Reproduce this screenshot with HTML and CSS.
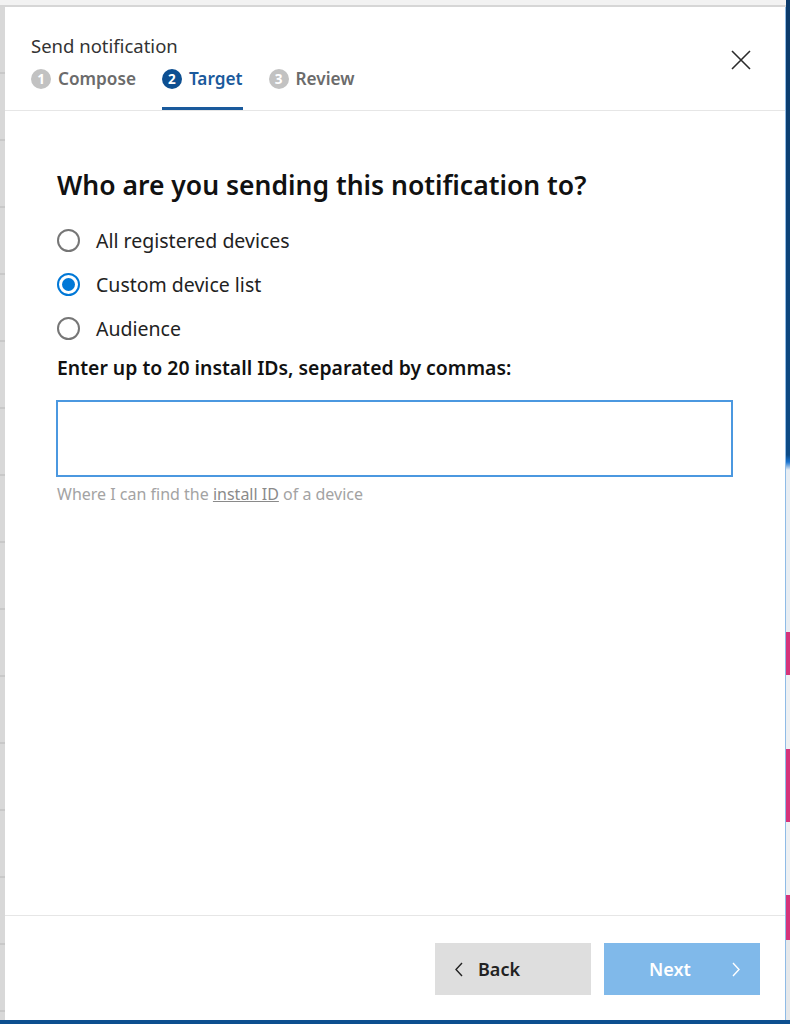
FILE: index.html
```html
<!DOCTYPE html>
<html lang="en">
<head>
  <meta charset="UTF-8" />
  <meta name="viewport" content="width=device-width, initial-scale=1.0" />
  <title>Send notification</title>
  <link rel="stylesheet" href="styles.css">
</head>
<body>
  <div class="screen">
    <div class="backdrop-top"></div>
    <div class="backdrop-right"></div>
    <div class="backdrop-left"></div>

    <div class="dialog">
      <div class="dialog-header">
        <div class="header-text">
          <div class="dialog-title">Send notification</div>
          <div class="steps">
            <div class="step">
              <span class="step-num">1</span>
              <span class="step-label">Compose</span>
            </div>
            <div class="step active">
              <span class="step-num">2</span>
              <span class="step-label">Target</span>
            </div>
            <div class="step">
              <span class="step-num">3</span>
              <span class="step-label">Review</span>
            </div>
          </div>
        </div>
        <button class="close" aria-label="Close">
          <svg width="20" height="20" viewBox="0 0 20 20">
            <path d="M1 1 L19 19 M19 1 L1 19" stroke="#2b2b2b" stroke-width="1.6" fill="none" />
          </svg>
        </button>
      </div>

      <div class="dialog-body">
        <h2 class="question">Who are you sending this notification to?</h2>

        <div class="radio-group">
          <label class="radio">
            <span class="radio-circle"></span>
            <span>All registered devices</span>
          </label>
          <label class="radio checked">
            <span class="radio-circle"></span>
            <span>Custom device list</span>
          </label>
          <label class="radio">
            <span class="radio-circle"></span>
            <span>Audience</span>
          </label>
        </div>

        <div class="field-label">Enter up to 20 install IDs, separated by commas:</div>
        <textarea class="ids-input"></textarea>
        <div class="help">Where I can find the <a href="#">install ID</a> of a device</div>
      </div>

      <div class="dialog-footer">
        <button class="btn back">
          <svg width="8" height="15" viewBox="0 0 8 15">
            <path d="M7 1 L1 7.5 L7 14" stroke="#222" stroke-width="1.4" fill="none" />
          </svg>
          <span>Back</span>
        </button>
        <button class="btn next">
          <span>Next</span>
          <svg width="8" height="15" viewBox="0 0 8 15">
            <path d="M1 1 L7 7.5 L1 14" stroke="#fff" stroke-width="1.4" fill="none" />
          </svg>
        </button>
      </div>
    </div>

    <div class="backdrop-bottom"></div>
  </div>
</body>
</html>
```

FILE: styles.css
```css
body {
  margin: 0;
  font-family: 'Noto Sans', 'Open Sans', sans-serif;
  color: #222;
  background: #f0f0f0;
}
.screen {
  display: grid;
  grid-template-columns: 5px 781px 4px;
  grid-template-rows: 7px 1013px 4px;
  width: 790px;
  height: 1024px;
  overflow: hidden;
}
.backdrop-top {
  grid-column: 1 / 3;
  grid-row: 1;
  background: #f2f2f2;
  border-bottom: 2px solid #d6d6d6;
}
.backdrop-left {
  grid-column: 1;
  grid-row: 2;
  background: repeating-linear-gradient(#d8d8d8 0, #d8d8d8 65px, #c8c8c8 65px, #c8c8c8 67px);
}
.backdrop-right {
  grid-column: 3;
  grid-row: 1 / 3;
  background: linear-gradient(
    #0b3a6a 0, #0d4b86 455px, #1a73d0 462px, #e8edf2 470px,
    #e8edf2 632px, #d6337a 632px, #d6337a 675px, #eef0f2 675px,
    #eef0f2 749px, #d6337a 749px, #d6337a 822px, #eef0f2 822px,
    #eef0f2 895px, #d6337a 895px, #d6337a 940px, #e6e8ea 940px);
}
.backdrop-bottom {
  grid-column: 1 / 4;
  grid-row: 3;
  background: #0d4f8f;
}

.dialog {
  grid-column: 2;
  grid-row: 2;
  background: white;
  border-right: 1px solid #8fbbe6;
  display: flex;
  flex-direction: column;
}

.dialog-header {
  display: flex;
  justify-content: space-between;
  padding: 28px 34px 0 26px;
  border-bottom: 1px solid #e6e6e6;
}
.dialog-title {
  font-size: 18.5px;
  line-height: 22px;
  color: #333;
}
.steps {
  display: flex;
  gap: 26px;
  margin-top: 10px;
}
.step {
  display: flex;
  align-items: center;
  gap: 7px;
  padding-bottom: 16px;
  border-bottom: 3px solid transparent;
  font-size: 17.2px;
  line-height: 24px;
  font-weight: 600;
  color: #6b6b6b;
}
.step-num {
  width: 20px;
  height: 20px;
  border-radius: 50%;
  background: #c2c2c2;
  color: white;
  font-size: 13.5px;
  line-height: 20px;
  text-align: center;
  font-weight: 700;
}
.step.active {
  color: #1a5a9c;
  border-bottom-color: #1a5a9c;
}
.step.active .step-num {
  background: #0d4f91;
}
.close {
  margin-top: 15px;
  align-self: flex-start;
  background: none;
  border: none;
  padding: 0;
  cursor: pointer;
  height: 20px;
}

.dialog-body {
  flex: 1;
  padding: 58px 52px 0 52px;
}
.question {
  margin: 0;
  font-size: 26.5px;
  line-height: 32px;
  font-weight: 600;
  color: #111;
}
.radio-group {
  margin-top: 17px;
}
.radio {
  display: flex;
  align-items: center;
  gap: 16px;
  height: 44px;
  font-size: 19.5px;
  color: #222;
}
.radio-circle {
  width: 19px;
  height: 19px;
  border: 2px solid #767676;
  border-radius: 50%;
  position: relative;
}
.radio.checked .radio-circle {
  border-color: #0078d7;
}
.radio.checked .radio-circle::after {
  content: '';
  position: absolute;
  top: 3px;
  left: 3px;
  width: 13px;
  height: 13px;
  border-radius: 50%;
  background: #0078d7;
}
.field-label {
  margin-top: 6px;
  font-size: 19.4px;
  line-height: 24px;
  font-weight: 600;
  color: #111;
}
.ids-input {
  display: block;
  margin: 20px 0 0 -1px;
  width: 677px;
  height: 77px;
  box-sizing: border-box;
  border: 2px solid #4b98e0;
  resize: none;
  font-family: inherit;
  font-size: 16px;
  outline: none;
}
.help {
  margin-top: 7px;
  font-size: 16px;
  line-height: 20px;
  color: #a3a3a3;
}
.help a {
  color: #8a8a8a;
}

.dialog-footer {
  display: flex;
  justify-content: flex-end;
  gap: 13px;
  padding: 27px 25px 25px 0;
  border-top: 1px solid #e6e6e6;
}
.btn {
  width: 156px;
  height: 52px;
  border: none;
  display: flex;
  align-items: center;
  font-family: inherit;
  font-size: 18px;
  font-weight: 600;
  cursor: pointer;
}
.back {
  background: #dedede;
  color: #222;
  padding-left: 20px;
  gap: 15px;
}
.next {
  background: #80b9ea;
  color: white;
  justify-content: space-between;
  padding: 0 20px 0 45px;
}
```
